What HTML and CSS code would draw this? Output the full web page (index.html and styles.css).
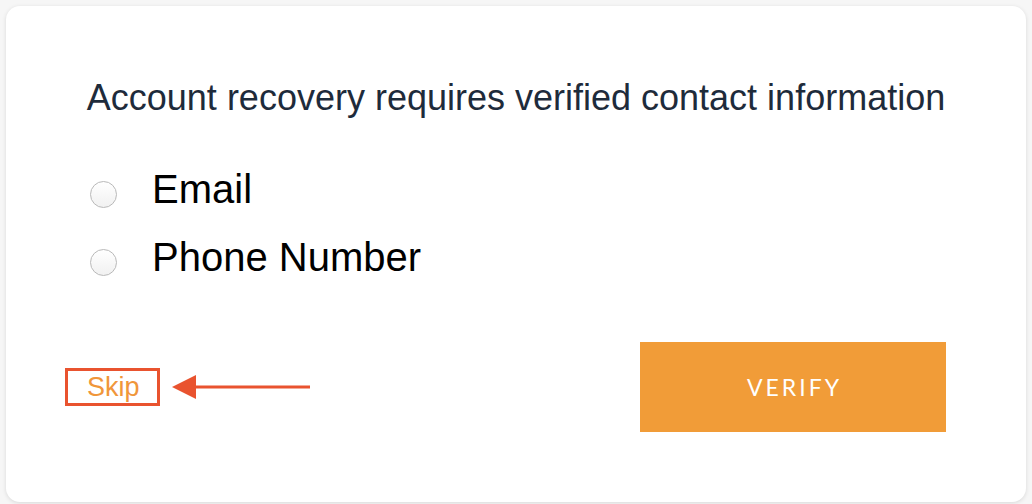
FILE: index.html
```html
<!DOCTYPE html>
<html lang="en">
<head>
<meta charset="utf-8">
<title>Account recovery</title>
<link rel="stylesheet" href="styles.css">
</head>
<body>
<div class="card">
  <h1 class="title">Account recovery requires verified contact information</h1>
  <div class="options">
    <label class="option"><span class="radio"></span><span class="option-label">Email</span></label>
    <label class="option"><span class="radio"></span><span class="option-label">Phone Number</span></label>
  </div>
  <div class="footer">
    <div class="skip-group">
      <span class="skip">Skip</span>
      <svg class="arrow" width="140" height="26" viewBox="0 0 140 26">
        <polygon points="0,13 24,1 24,25" fill="#e9532f"/>
        <rect x="20" y="11.5" width="118" height="3" fill="#e9532f"/>
      </svg>
    </div>
    <button class="verify">VERIFY</button>
  </div>
</div>
</body>
</html>
```
FILE: styles.css
```css
html, body {
  margin: 0;
  padding: 0;
}
body {
  background: #f6f6f6;
  width: 1032px;
  height: 504px;
  padding: 6px;
  box-sizing: border-box;
  font-family: "Liberation Sans", Arial, sans-serif;
}
.card {
  background: #fff;
  border-radius: 14px;
  box-shadow: 0 1px 4px rgba(0, 0, 0, 0.12);
  height: 496px;
  box-sizing: border-box;
  padding: 70px 80px 70px 80px;
  display: flex;
  flex-direction: column;
}
.title {
  margin: 0;
  font-weight: normal;
  font-size: 36px;
  line-height: 44px;
  color: #1e2b3b;
  text-align: center;
  white-space: nowrap;
}
.options {
  margin-top: 45px;
  padding-left: 4px;
  display: flex;
  flex-direction: column;
  gap: 20px;
}
.option {
  display: flex;
  align-items: flex-start;
  height: 48px;
}
.radio {
  width: 27px;
  height: 27px;
  border-radius: 50%;
  border: 1px solid #b9b9b9;
  background: linear-gradient(#ffffff, #f1f1f1);
  box-sizing: border-box;
  margin-top: 16px;
  margin-right: 35px;
  flex: none;
}
.option-label {
  font-size: 40px;
  line-height: 48px;
  color: #000;
}
.footer {
  margin-top: auto;
  margin-left: -21px;
  display: flex;
  align-items: center;
  justify-content: space-between;
}
.skip-group {
  display: flex;
  align-items: center;
}
.skip {
  border: 3px solid #e9532f;
  padding: 0 17px 0 19px;
  height: 32px;
  line-height: 33px;
  font-size: 27px;
  color: #f0963a;
}
.arrow {
  margin-left: 12px;
  display: block;
}
.verify {
  width: 306px;
  height: 90px;
  border: none;
  background: #f19c38;
  color: #fff;
  font-family: Lato, "Open Sans", sans-serif;
  font-size: 23px;
  letter-spacing: 3px;
  padding: 0 0 0 3px;
}
```
